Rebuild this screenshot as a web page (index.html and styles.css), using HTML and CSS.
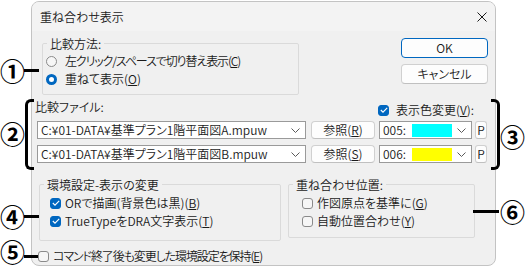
FILE: index.html
```html
<!DOCTYPE html>
<html lang="ja">
<head>
<meta charset="utf-8">
<link rel="stylesheet" href="styles.css">
</head>
<body>
<div class="stage">
  <div class="dialog">
    <div class="titlebar">
      <span class="title">重ね合わせ表示</span>
      <svg class="close" width="10" height="10" viewBox="0 0 10 10"><path d="M0.5 0.5L9.5 9.5M9.5 0.5L0.5 9.5" stroke="#1a1a1a" stroke-width="1"/></svg>
    </div>
    <div class="content">
      <div class="top-row">
        <div class="group g-method">
          <div class="legend">比較方法:</div>
          <div class="opt"><span class="radio"></span><span class="tight">左クリック/スペースで切り替え表示(<u>C</u>)</span></div>
          <div class="opt"><span class="radio on"></span>重ねて表示(<u>O</u>)</div>
        </div>
        <div class="buttons">
          <div class="btn primary">OK</div>
          <div class="btn">キャンセル</div>
        </div>
      </div>

      <div class="files">
        <div class="files-label">比較ファイル:</div>
        <div class="color-toggle"><span class="check on"><svg width="8" height="6" viewBox="0 0 8 6"><path d="M0.8 3L3 5.2L7.2 0.8" fill="none" stroke="#fff" stroke-width="1.1"/></svg></span>表示色変更(<u>V</u>):</div>

        <div class="combo file"><span class="val">C:¥01-DATA¥基準プラン1階平面図A.mpuw</span><svg class="chev" width="9" height="5" viewBox="0 0 9 5"><path d="M0.5 0.5L4.5 4.5L8.5 0.5" fill="none" stroke="#5a5a5a"/></svg></div>
        <div class="btn ref">参照(<u>R</u>)</div>
        <div class="combo color"><span class="num">005:</span><span class="swatch cyan"></span><svg class="chev" width="9" height="5" viewBox="0 0 9 5"><path d="M0.5 0.5L4.5 4.5L8.5 0.5" fill="none" stroke="#5a5a5a"/></svg></div>
        <div class="btn pbtn">P</div>

        <div class="combo file"><span class="val">C:¥01-DATA¥基準プラン1階平面図B.mpuw</span><svg class="chev" width="9" height="5" viewBox="0 0 9 5"><path d="M0.5 0.5L4.5 4.5L8.5 0.5" fill="none" stroke="#5a5a5a"/></svg></div>
        <div class="btn ref">参照(<u>S</u>)</div>
        <div class="combo color"><span class="num">006:</span><span class="swatch yellow"></span><svg class="chev" width="9" height="5" viewBox="0 0 9 5"><path d="M0.5 0.5L4.5 4.5L8.5 0.5" fill="none" stroke="#5a5a5a"/></svg></div>
        <div class="btn pbtn">P</div>
      </div>

      <div class="bottom-row">
        <div class="group g-env">
          <div class="legend">環境設定-表示の変更</div>
          <div class="opt first"><span class="check on"><svg width="8" height="6" viewBox="0 0 8 6"><path d="M0.8 3L3 5.2L7.2 0.8" fill="none" stroke="#fff" stroke-width="1.1"/></svg></span>ORで描画(背景色は黒)(<u>B</u>)</div>
          <div class="opt"><span class="check on"><svg width="8" height="6" viewBox="0 0 8 6"><path d="M0.8 3L3 5.2L7.2 0.8" fill="none" stroke="#fff" stroke-width="1.1"/></svg></span>TrueTypeをDRA文字表示(<u>T</u>)</div>
        </div>
        <div class="group g-pos">
          <div class="legend">重ね合わせ位置:</div>
          <div class="opt first"><span class="check"></span>作図原点を基準に(<u>G</u>)</div>
          <div class="opt"><span class="check"></span>自動位置合わせ(<u>Y</u>)</div>
        </div>
      </div>

      <div class="opt keep"><span class="check"></span><span class="tight">コマンド終了後も変更した環境設定を保持(<u>E</u>)</span></div>
    </div>
  </div>

  <div class="anno num1">①</div>
  <div class="anno-line l1"></div>
  <div class="anno num2">②</div>
  <div class="bracket left"></div>
  <div class="anno num3">③</div>
  <div class="bracket right"></div>
  <div class="anno num4">④</div>
  <div class="anno-line l4"></div>
  <div class="anno num5">⑤</div>
  <div class="anno-line l5"></div>
  <div class="anno num6">⑥</div>
  <div class="anno-line l6"></div>
</div>
</body>
</html>
```
FILE: styles.css
```css
* { box-sizing: border-box; margin: 0; padding: 0; }
body {
  margin: 0;
  background: #fff;
  font-family: "Noto Sans CJK JP", "Noto Sans", sans-serif;
  font-size: 12px;
  font-weight: 350;
  color: #1a1a1a;
  font-feature-settings: "palt";
}
u { text-decoration: underline; text-underline-offset: 1px; }
.tight { letter-spacing: -1.1px; }

.stage {
  position: relative;
  width: 526px;
  height: 268px;
  overflow: hidden;
  padding: 1px 0 0 31px;
}

.dialog {
  width: 465px;
  height: 265px;
  border: 1px solid #c3c3c3;
  border-radius: 8px;
  background: #f0f0f0;
  overflow: hidden;
}

.titlebar {
  height: 29px;
  display: flex;
  align-items: center;
  justify-content: space-between;
  padding: 0 8px;
  background: #f3f3f3;
}
.title { line-height: 16px; }

.content { padding-top: 7px; }

.top-row { display: flex; align-items: flex-start; height: 57px; }

.group {
  border: 1px solid #dadada;
  border-radius: 2px;
}
.legend {
  width: fit-content;
  line-height: 16px;
  height: 16px;
  margin-top: -8px;
  margin-left: 4px;
  padding: 0 3px;
  background: #f0f0f0;
}
.opt {
  display: flex;
  align-items: center;
  height: 18px;
  line-height: 16px;
  white-space: nowrap;
}

.g-method {
  margin: 5px 0 0 10px;
  width: 257px;
  height: 52px;
}
.g-method .opt { padding-left: 3px; }

.radio {
  width: 11px;
  height: 11px;
  border: 1px solid #8a8a8a;
  border-radius: 50%;
  background: #f6f6f6;
  margin-right: 8px;
  flex: none;
}
.radio.on {
  border: 3px solid #0067c0;
  background: #fff;
}

.check {
  width: 11px;
  height: 11px;
  border: 1px solid #8a8a8a;
  border-radius: 3px;
  background: #f6f6f6;
  margin-right: 4px;
  flex: none;
  display: flex;
  align-items: center;
  justify-content: center;
}
.check.on { background: #0067c0; border-color: #0067c0; }

.buttons {
  margin-left: auto;
  margin-right: 7px;
  width: 87px;
  display: flex;
  flex-direction: column;
  gap: 6px;
}
.btn {
  height: 20px;
  border: 1px solid #d0d0d0;
  border-bottom-color: #c0c0c0;
  border-radius: 4px;
  background: #fdfdfd;
  display: flex;
  align-items: center;
  justify-content: center;
  line-height: 16px;
}
.btn.primary { border: 1px solid #0067c0; }

.files {
  margin-top: 4px;
  padding-left: 5px;
  display: grid;
  grid-template-columns: 269px 69px 97px 15px;
  grid-template-rows: 22px 24px 18px;
}
.files-label {
  grid-column: 1 / 3;
  margin-left: -2px;
  line-height: 16px;
  align-self: start;
}
.color-toggle {
  grid-column: 3 / 5;
  margin-left: 3px;
  align-self: end;
  margin-bottom: 3px;
  display: flex;
  align-items: center;
  height: 16px;
  line-height: 16px;
  white-space: nowrap;
}
.color-toggle .check { margin-right: 7px; }

.combo {
  height: 18px;
  border: 1px solid #9a9a9a;
  background: #fff;
  display: flex;
  align-items: center;
  align-self: start;
}
.combo.file { padding-left: 3px; padding-right: 5px; }
.combo .val { flex: 1; white-space: nowrap; overflow: hidden; line-height: 16px; }
.combo.color { margin-left: 4px; padding-left: 3px; padding-right: 5px; }
.combo .num { width: 29px; line-height: 16px; }
.swatch { width: 40px; height: 13px; margin-right: auto; }
.swatch.cyan { background: #00ffff; }
.swatch.yellow { background: #ffff00; }
.chev { flex: none; }

.btn.ref { margin-left: 5px; height: 18px; align-self: start; }
.btn.pbtn { margin-left: 3px; height: 18px; border-radius: 3px; align-self: start; }

.bottom-row {
  margin-top: 21px;
  display: flex;
  align-items: flex-start;
}
.g-env {
  margin-left: 7px;
  width: 242px;
  height: 57px;
}
.g-env .opt { padding-left: 10px; }
.g-pos {
  margin-left: 7px;
  width: 187px;
  height: 54px;
}
.g-pos .opt { padding-left: 13px; }
.opt.first { margin-top: 1px; }

.keep {
  margin-top: 6px;
  padding-left: 6px;
}

/* annotations overlay */
.anno {
  position: absolute;
  font-size: 25px;
  font-weight: 700;
  line-height: 25px;
  height: 25px;
  color: #000;
  font-feature-settings: normal;
}
.num1 { left: 0; top: 58px; }
.num2 { left: 0; top: 121px; }
.num3 { left: 500px; top: 124px; }
.num4 { left: 0; top: 204px; }
.num5 { left: 0; top: 239px; }
.num6 { left: 500px; top: 199px; }

.anno-line { position: absolute; height: 3px; background: #000; }
.l1 { left: 24px; top: 69px; width: 15px; }
.l4 { left: 24px; top: 215px; width: 15px; }
.l5 { left: 24px; top: 255px; width: 14px; }
.l6 { left: 473px; top: 210px; width: 26px; }

.bracket {
  position: absolute;
  top: 99px;
  width: 9px;
  height: 71px;
  border: 3px solid #000;
}
.bracket.left { left: 25px; border-right: none; border-radius: 6px 0 0 6px; }
.bracket.right { left: 491px; border-left: none; border-radius: 0 6px 6px 0; }
```
